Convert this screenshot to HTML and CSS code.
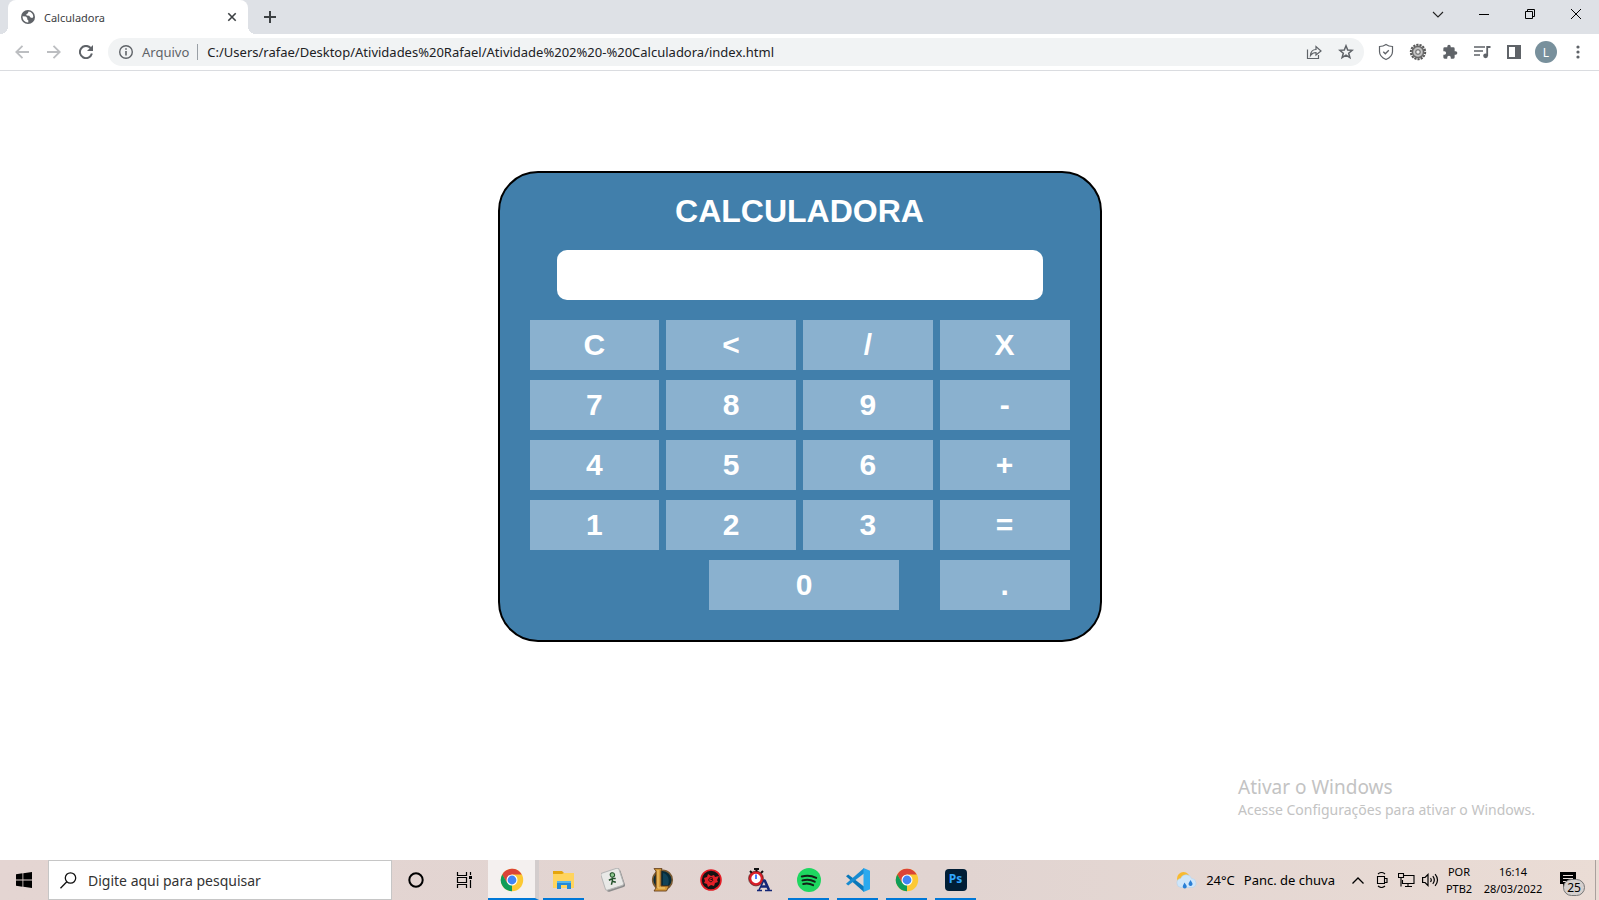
FILE: index.html
```html
<!DOCTYPE html>
<html lang="pt-BR">
<head>
<meta charset="utf-8">
<title>Calculadora</title>
<link rel="stylesheet" href="styles.css">
</head>
<body>
<svg class="defs" width="0" height="0" aria-hidden="true">
  <symbol id="chrome" viewBox="0 0 24 24">
    <circle cx="12" cy="12" r="11.2" fill="#fcc934"/>
    <path d="M2.3 6.4A11.2 11.2 0 0 1 21.7 6.4H12L7 15z" fill="#db4437"/>
    <path d="M2.3 6.4L7.1 14.8 12 17.6 12 23.2A11.2 11.2 0 0 1 2.3 6.4z" fill="#0f9d58"/>
    <circle cx="12" cy="12" r="5.5" fill="#fff"/><circle cx="12" cy="12" r="4.4" fill="#4285f4"/>
  </symbol>
</svg>

<header class="browser">
  <div class="tabstrip">
    <div class="tab">
      <svg width="14" height="14" viewBox="0 0 14 14"><circle cx="7" cy="7" r="7" fill="#5f6368"/><path d="M1.6 6.3l3.3.2 1.4 1.6-.2 1.2 1.2 1v2.1C4 12.6 1.4 10 1.6 6.3zM7.6 1.5L6.9 3.3 5.3 4.2 5.6 5.6 8.2 5.7 9.5 7.6 11.3 7.9 12.3 6.8C12.3 4 10.400 1.800 7.600 1.500z" fill="#fff"/></svg>
      <span class="tab-title">Calculadora</span>
      <button class="plain" aria-label="Fechar guia"><svg width="10" height="10" viewBox="0 0 10 10"><path d="M1.300 1.300l7.400 7.400M8.700 1.300L1.300 8.700" stroke="#3c4043" stroke-width="1.600"/></svg></button>
    </div>
    <button class="plain new-tab" aria-label="Nova guia"><svg width="12" height="12" viewBox="0 0 12 12"><path d="M6 0v12M0 6h12" stroke="#3c4043" stroke-width="2"/></svg></button>
    <div class="window-buttons">
      <button class="plain" aria-label="Pesquisar guias"><svg width="12" height="7" viewBox="0 0 12 7"><path d="M1 1l5 5 5-5" fill="none" stroke="#222" stroke-width="1.100"/></svg></button>
      <button class="plain" aria-label="Minimizar"><svg width="10" height="10" viewBox="0 0 10 10"><path d="M0 5.500h10" stroke="#000"/></svg></button>
      <button class="plain" aria-label="Restaurar"><svg width="10" height="10" viewBox="0 0 10 10"><path d="M.5 2.500h7v7h-7zM2.500 2.500v-2h7v7h-2" fill="none" stroke="#000"/></svg></button>
      <button class="plain" aria-label="Fechar"><svg width="10" height="10" viewBox="0 0 10 10"><path d="M0 0l10 10M10 0L0 10" stroke="#000"/></svg></button>
    </div>
  </div>
  <div class="toolbar">
    <div class="slots">
      <button class="plain" aria-label="Voltar"><svg width="14" height="14" viewBox="0 0 14 14"><path d="M14 7H1.500M7.500.8L1.300 7l6.200 6.200" fill="none" stroke="#bcbec1" stroke-width="1.800"/></svg></button>
      <button class="plain" aria-label="Avançar"><svg width="14" height="14" viewBox="0 0 14 14"><path d="M0 7h12.500M6.500.8L12.700 7l-6.200 6.200" fill="none" stroke="#bcbec1" stroke-width="1.800"/></svg></button>
      <button class="plain" aria-label="Recarregar"><svg width="14" height="14" viewBox="0 0 14 14"><path d="M11.600 3A6.100 6.100 0 1 0 12.900 8.600" fill="none" stroke="#5f6368" stroke-width="2"/><path d="M14 0v6H8z" fill="#5f6368"/></svg></button>
    </div>
    <div class="omnibox">
      <svg width="14" height="14" viewBox="0 0 14 14"><circle cx="7" cy="7" r="6.300" fill="none" stroke="#5f6368" stroke-width="1.400"/><path d="M7 6v4.500M7 3.300v1.500" stroke="#5f6368" stroke-width="1.600"/></svg>
      <label class="scheme" for="url">Arquivo</label>
      <input id="url" class="url" value="C:/Users/rafae/Desktop/Atividades%20Rafael/Atividade%202%20-%20Calculadora/index.html">
      <div class="slots">
        <button class="plain" aria-label="Compartilhar"><svg width="16" height="15" viewBox="0 0 16 15"><path d="M1.500 4.500v9h11v-3.500M4.500 10.500c.3-4 2.500-6 5.500-6V1.500l5 4.500-5 4V7.500c-2.500 0-4 .8-5.500 3z" fill="none" stroke="#5f6368" stroke-width="1.200"/></svg></button>
        <button class="plain" aria-label="Favoritos"><svg width="16" height="16" viewBox="0 0 16 16"><path d="M8 1.800l1.700 4.200 4.500.3-3.500 2.900 1.200 4.500L8 11.200l-3.900 2.500 1.200-4.500L1.800 6.300 6.300 6z" fill="none" stroke="#5f6368" stroke-width="1.500"/></svg></button>
      </div>
    </div>
    <div class="slots">
      <button class="plain" aria-label="Proteção"><svg width="16" height="18" viewBox="0 0 16 18"><path d="M8 1.500C6 3 3.800 3.500 1.500 3.500v5C1.500 12.500 4.500 15 8 16.500c3.500-1.500 6.500-4 6.500-8v-5C12.200 3.500 10 3 8 1.500z" fill="none" stroke="#5f6368" stroke-width="1.200"/><path d="M5.300 8.800l2 2 3.500-3.600" fill="none" stroke="#5f6368" stroke-width="1.300"/></svg></button>
      <button class="plain" aria-label="Extensão"><svg width="18" height="18" viewBox="0 0 18 18"><circle cx="9" cy="9" r="6.500" fill="#a8a8a8"/><circle cx="9" cy="9" r="7.200" fill="none" stroke="#555" stroke-width="2" stroke-dasharray="2.200 1"/><circle cx="9" cy="9" r="5.600" fill="none" stroke="#666" stroke-width="1.200"/><circle cx="9" cy="9" r="3.800" fill="none" stroke="#ccc"/><circle cx="9" cy="9" r="2.200" fill="#eee" stroke="#666"/></svg></button>
      <button class="plain" aria-label="Extensões"><svg width="16" height="16" viewBox="0 0 24 24"><path fill="#5f6368" d="M20.500 11H19V7a2 2 0 0 0-2-2h-4V3.500a2.500 2.500 0 0 0-5 0V5H4a2 2 0 0 0-2 2v3.800h1.500a2.700 2.700 0 0 1 0 5.400H2V20a2 2 0 0 0 2 2h3.800v-1.500a2.700 2.700 0 0 1 5.400 0V22H17a2 2 0 0 0 2-2v-4h1.500a2.500 2.500 0 0 0 0-5z"/></svg></button>
      <button class="plain" aria-label="Mídia"><svg width="17" height="14" viewBox="0 0 17 14"><path d="M0 2h11M0 6h9M0 10h6" stroke="#5f6368" stroke-width="1.700"/><path d="M13.200 11V2H16.500" fill="none" stroke="#5f6368" stroke-width="1.800"/><circle cx="11.600" cy="10.800" r="2.400" fill="#5f6368"/></svg></button>
      <button class="plain" aria-label="Painel lateral"><svg width="14" height="14" viewBox="0 0 14 14"><path d="M0 0h14v14H0zM2 2v10h6V2z" fill="#5f6368" fill-rule="evenodd"/></svg></button>
      <button class="plain avatar" aria-label="Perfil L">L</button>
      <button class="plain" aria-label="Menu"><svg width="4" height="14" viewBox="0 0 4 14"><g fill="#5f6368"><circle cx="2" cy="2" r="1.600"/><circle cx="2" cy="7" r="1.600"/><circle cx="2" cy="12" r="1.600"/></g></svg></button>
    </div>
  </div>
</header>

<main class="page">
  <section class="calculator">
    <h1>CALCULADORA</h1>
    <input class="display" aria-label="Visor">
    <div class="keys">
      <button>C</button><button>&lt;</button><button>/</button><button>X</button>
      <button>7</button><button>8</button><button>9</button><button>-</button>
      <button>4</button><button>5</button><button>6</button><button>+</button>
      <button>1</button><button>2</button><button>3</button><button>=</button>
      <button class="zero">0</button><button>.</button>
    </div>
  </section>
  <aside class="watermark">
    <p class="watermark-title">Ativar o Windows</p>
    <p>Acesse Configurações para ativar o Windows.</p>
  </aside>
</main>

<footer class="taskbar">
  <button class="plain start" aria-label="Iniciar"><svg width="16" height="16" viewBox="0 0 16 16"><path d="M0 2.200l6.500-.9v6.200H0zM7.300 1.200L16 0v7.500H7.300zM0 8.400h6.500v6.300L0 13.800zM7.300 8.400H16V16l-8.700-1.200z"/></svg></button>
  <div class="search">
    <svg width="17" height="17" viewBox="0 0 17 17"><circle cx="10.500" cy="6" r="5.200" fill="none" stroke="#111" stroke-width="1.300"/><path d="M6.800 9.800L.5 16.300" stroke="#111" stroke-width="1.300"/></svg>
    <input aria-label="Pesquisar" placeholder="Digite aqui para pesquisar">
  </div>
  <nav class="apps">
    <button class="plain" aria-label="Cortana"><svg width="16" height="16" viewBox="0 0 16 16"><circle cx="8" cy="8" r="6.700" fill="none" stroke="#000" stroke-width="2"/></svg></button>
    <button class="plain" aria-label="Visão de tarefas"><svg width="17" height="16" viewBox="0 0 17 16"><path d="M1.500 0v3.500h9V0M1.500 16v-3.500h9V16M1.500 5.500h9v5h-9zM14.500 0v3M14.500 8v8" fill="none" stroke="#000" stroke-width="1.200"/><path d="M13 4h3v3h-3z"/></svg></button>
    <button class="plain active" aria-label="Google Chrome"><svg width="24" height="24"><use href="#chrome"/></svg></button>
    <button class="plain running" aria-label="Explorador de Arquivos"><svg width="22" height="20" viewBox="0 0 22 20"><path d="M0 1h9l2 2h10v15H0z" fill="#e5a50d"/><path d="M0 4h9l2-1h10v15H0z" fill="#ffd45e"/><path d="M4 19v-8h14v8h-4v-4H8v4z" fill="#2389d7"/><path d="M4 11h14v2H4z" fill="#54b5ee"/></svg></button>
    <button class="plain" aria-label="Stickman"><svg width="24" height="24" viewBox="0 0 24 24"><g transform="rotate(-18 12 12)"><rect x="3" y="4" width="19" height="18" rx="2" fill="#8c8c8c"/><rect x="2" y="2" width="19" height="18" rx="2" fill="#e9e9e7" stroke="#b5b5b5"/><circle cx="13" cy="7" r="2.200" fill="#8bc68d" stroke="#23522b"/><path d="M12 9.500l-1 3.500-2 3M11 13l3 2M8 11l4-.5 3 1" fill="none" stroke="#23522b" stroke-width="1.500"/></g></svg></button>
    <button class="plain" aria-label="League of Legends"><svg width="24" height="24" viewBox="0 0 24 24"><circle cx="12.500" cy="12" r="9.800" fill="#082b38" stroke="#7a5a32" stroke-width="1.600"/><path d="M13 5c5 1 7 7 5 12h-5z" fill="#124358"/><path d="M4 .6h8L11 3v15h8l-2.500 5H4l2-3V3z" fill="#d79b38" stroke="#65401c" stroke-width=".9"/><path d="M8 2v18h7" fill="none" stroke="#f5cd78"/></svg></button>
    <button class="plain" aria-label="Jogos"><svg width="22" height="22" viewBox="0 0 22 22"><circle cx="11" cy="11" r="10" fill="#151313" stroke="#e31c25" stroke-width="1.600"/><path d="M4 9l3-1 1-3 3 2 3-1 1 2 4-1-2 4 1 2-3 1-1 3-3-1-3 2-1-3-3-1 1-2z" fill="#e52028"/><path d="M13 9.500c-2.500-2-5 0-4 2.200 1.500 2.300 4.500.3 3.500-1.200h-2" fill="none" stroke="#151313" stroke-width="1"/></svg></button>
    <button class="plain" aria-label="Relógio"><svg width="24" height="24" viewBox="0 0 24 24"><path d="M6 1h5M8.500 1v3M2 3l2 2M15 3l-2 2" stroke="#111" stroke-width="2"/><circle cx="8" cy="10.500" r="6" fill="#fff" stroke="#d91e28" stroke-width="2.600"/><circle cx="8" cy="10.500" r="7.400" fill="none" stroke="#300" stroke-width=".6"/><path d="M8 6.500V11" stroke="#15f" stroke-width="1.500"/><path d="M9 22.500h5M17 22.500h7M11 22l5-10h1" fill="none" stroke="#142777" stroke-width="1.600"/><path d="M16.500 12l4.500 10M13 18.500h7" stroke="#142777" stroke-width="2.600"/></svg></button>
    <button class="plain running" aria-label="Spotify"><svg width="24" height="24" viewBox="0 0 24 24"><circle cx="12" cy="12" r="12" fill="#1ed760"/><path d="M4.800 8.500c5-1.400 10-.9 14.400 1.400M5.500 12.400c4.300-1.200 8.500-.8 12.200 1.300M6.200 16c3.500-.9 6.800-.5 9.900 1.200" fill="none" stroke="#122017" stroke-width="2" stroke-linecap="round"/></svg></button>
    <button class="plain running" aria-label="Visual Studio Code"><svg width="24" height="24" viewBox="0 0 24 24"><path d="M0 8.300l2.200-1.800L18 18.500V24z" fill="#0877b9"/><path d="M0 15.700l2.200 1.800L18 5.500V0z" fill="#168bd1"/><path d="M17.500 0L24 2.800v18.400L17.500 24z" fill="#2aa9ee"/></svg></button>
    <button class="plain running" aria-label="Google Chrome"><svg width="24" height="24"><use href="#chrome"/></svg></button>
    <button class="plain running" aria-label="Photoshop"><span class="ps">Ps</span></button>
  </nav>
  <div class="tray">
    <button class="plain weather">
      <svg width="21" height="17" viewBox="0 0 21 17"><circle cx="7.500" cy="6.500" r="6.500" fill="#f8ba31"/><path d="M5 15.500a4.600 4.600 0 0 1-.3-9.100A5.800 5.800 0 0 1 15.500 6.400a4.600 4.600 0 0 1 .8 9.100z" fill="#cfe6fa" stroke="#b3d3ee" stroke-width=".6"/><path d="M8.500 10.500l2 3a2 2 0 1 1-3.500 0zM14.500 8l1.800 3a2 2 0 1 1-3.500 0z" fill="#2a7fd5"/></svg>
      <span>24°C</span><span>Panc. de chuva</span>
    </button>
    <div class="tray-icons">
      <button class="plain" aria-label="Ícones ocultos"><svg width="12" height="7" viewBox="0 0 12 7"><path d="M.5 6.500L6 1l5.500 5.500" fill="none" stroke="#000" stroke-width="1.300"/></svg></button>
      <button class="plain" aria-label="Reunir agora"><svg width="12" height="16" viewBox="0 0 12 16"><path d="M1.500 4.500h7v7h-7zM8.500 6.500H11v4H8.500M2 2C4 .3 7 .3 9 2M2 14C4 15.700 7 15.700 9 14" fill="none" stroke="#000" stroke-width="1.100"/></svg></button>
      <button class="plain" aria-label="Rede"><svg width="17" height="15" viewBox="0 0 17 15"><path d="M6 2.500h10v8H4.500V7M10 10.500v3M7 13.500h7M.5.5h5v4h-5zM3 4.500v9" fill="none" stroke="#000" stroke-width="1.100"/></svg></button>
      <button class="plain" aria-label="Volume"><svg width="17" height="14" viewBox="0 0 17 14"><path d="M.6 4.500h2.400l3-3v11l-3-3H.6zM8.500 5c1 1.300 1 2.700 0 4M10.800 3.200c2 2.500 2 5.100 0 7.600M13.100 1.200c3 3.600 3 8 0 11.600" fill="none" stroke="#000" stroke-width="1.200"/></svg></button>
    </div>
    <button class="plain stacked language"><span>POR</span><span>PTB2</span></button>
    <button class="plain stacked clock"><span>16:14</span><span>28/03/2022</span></button>
    <button class="plain notices" aria-label="25 notificações"><svg width="16" height="16" viewBox="0 0 16 16"><path d="M0 0h16v12H7l-4 4v-4H0z"/><path d="M3 3.500h10M3 6.500h10M3 9.500h7" stroke="#e6dad5"/></svg><span class="badge">25</span></button>
    <span class="show-desktop"></span>
  </div>
</footer>
</body>
</html>
```
FILE: styles.css
```css
* { box-sizing: border-box; }
body {
  margin: 0;
  min-height: 100vh;
  display: flex;
  flex-direction: column;
  background: #fff;
  font-family: "Noto Sans", "Open Sans", sans-serif;
  font-size: 12px;
  color: #202124;
}
h1, p { margin: 0; }
svg { display: block; flex: none; }
input { min-width: 0; border: 0; padding: 0; background: transparent; font: inherit; color: inherit; outline: 0; }
.defs { position: absolute; }
.plain {
  display: flex;
  align-items: center;
  justify-content: center;
  border: 0;
  padding: 0;
  background: transparent;
  font: inherit;
  color: inherit;
}

.browser { border-bottom: 1px solid #dadce0; }
.tabstrip { display: flex; height: 34px; padding-left: 8px; background: #dee1e6; }
.tab {
  position: relative;
  display: flex;
  align-items: center;
  gap: 9px;
  width: 240px;
  padding: 0 11px 0 13px;
  border-radius: 8px 8px 0 0;
  background: #fff;
}
.tab::before, .tab::after {
  content: "";
  position: absolute;
  bottom: 0;
  width: 8px;
  height: 8px;
}
.tab::before { left: -8px; background: radial-gradient(circle at 0 0, #dee1e6 8px, #fff 8px); }
.tab::after { right: -8px; background: radial-gradient(circle at 100% 0, #dee1e6 8px, #fff 8px); }
.tab-title { flex: 1; font-size: 11px; color: #3c4043; }
.new-tab { width: 44px; }
.window-buttons { display: flex; height: 28px; margin-left: auto; }
.window-buttons .plain { width: 46px; }

.toolbar { display: flex; align-items: center; gap: 6px; height: 36px; padding: 0 5px 0 6px; }
.slots { display: flex; align-items: center; }
.slots .plain { width: 32px; height: 28px; }
.slots .avatar {
  width: 22px;
  height: 22px;
  margin: 0 5px;
  border-radius: 50%;
  background: #78909c;
  color: #fff;
}
.omnibox {
  flex: 1;
  display: flex;
  align-items: center;
  height: 28px;
  padding: 0 2px 0 11px;
  border-radius: 14px;
  background: #f1f3f4;
  font-size: 13px;
}
.scheme {
  margin: 0 9px;
  padding-right: 8px;
  border-right: 1px solid #9aa0a6;
  line-height: 16px;
  color: #5f6368;
}
.url { flex: 1; height: 20px; }

.page {
  position: relative;
  flex: 1;
  display: flex;
  flex-direction: column;
  align-items: center;
  padding: 100px 20px;
}
.calculator {
  display: flex;
  flex-direction: column;
  align-items: center;
  gap: 20px;
  width: 100%;
  max-width: 604px;
  padding: 19px 30px 30px;
  border: 2px solid #000;
  border-radius: 40px;
  background: #417fab;
  font-family: "Liberation Sans", Arial, sans-serif;
  font-weight: bold;
  color: #fff;
}
.calculator h1 { font-size: 32px; line-height: 38px; }
.display {
  width: 90%;
  height: 50px;
  padding: 0 10px;
  border-radius: 10px;
  background: #fff;
  font-size: 30px;
  color: #000;
}
.keys {
  align-self: stretch;
  display: grid;
  grid-template-columns: repeat(4, 1fr);
  gap: 10px 7px;
}
.keys button {
  height: 50px;
  border: 0;
  padding: 0;
  background: #8ab1cf;
  font: inherit;
  font-size: 30px;
  color: inherit;
}
.keys .zero { grid-column: 1 / 4; justify-self: end; width: 47%; margin-right: 34px; }
.watermark {
  position: absolute;
  right: 64px;
  bottom: 40px;
  font-size: 14px;
  line-height: 20px;
  color: #c3c3c3;
}
.watermark-title { font-size: 19px; line-height: 26px; }

.taskbar {
  display: flex;
  height: 40px;
  background: linear-gradient(90deg, #e4d5d2, #e1d4d1 60%, #eadcd5);
  color: #000;
}
.start { width: 48px; }
.search {
  display: flex;
  align-items: center;
  gap: 11px;
  width: 344px;
  padding: 0 11px;
  border: 1px solid #c6c6c6;
  background: #fff;
}
.search input { flex: 1; font-size: 14px; }
.search input::placeholder { color: #333; opacity: 1; }
.apps { display: flex; }
.apps .plain { width: 48px; }
.apps .plain:nth-child(n + 5) { width: 49px; }
.apps .running, .apps .plain.running:nth-child(n + 5) {
  width: 41px;
  margin: 0 4px;
  border-bottom: 2px solid #0078d7;
  padding-top: 2px;
}
.apps .plain.active {
  width: 51px;
  border-right: 4px solid #d3cdcd;
  border-bottom: 2px solid #0078d7;
  padding-top: 2px;
  background: #f4f0ef;
}
.ps {
  width: 22px;
  height: 22px;
  border-radius: 4px;
  background: #001e36;
  font-size: 12px;
  font-weight: bold;
  line-height: 20px;
  color: #31a8ff;
}
.tray { display: flex; margin-left: auto; }
.weather { gap: 9px; font-size: 13px; }
.tray-icons { display: flex; margin-left: 11px; }
.tray-icons .plain { width: 24px; }
.stacked { flex-direction: column; padding-bottom: 1px; font-size: 11px; line-height: 17px; }
.language { width: 34px; }
.clock { width: 74px; }
.notices { position: relative; width: 45px; padding-right: 10px; }
.badge {
  position: absolute;
  left: 13px;
  top: 19px;
  width: 22px;
  border: 1px solid #777;
  border-radius: 9px;
  background: #d5d0ce;
  font-size: 12px;
  line-height: 15px;
}
.show-desktop { width: 4px; border-left: 1px solid #aaa19e; }
```
